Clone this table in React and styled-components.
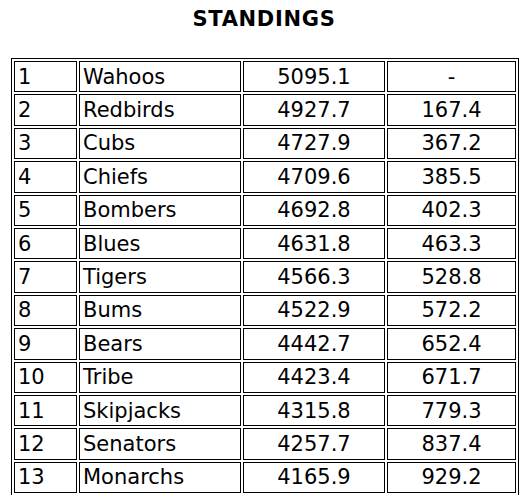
import React from 'react';
import styled, { createGlobalStyle } from 'styled-components';

const GlobalStyle = createGlobalStyle`
    body {
        margin: 0;
        background: #ffffff;
        font-family: "DejaVu Sans", Verdana, sans-serif;
        color: #000000;
    }
`

const Page = styled.div`
    padding-top: 7px;
`

const Title = styled.h1`
    margin: 0;
    font-size: 21px;
    font-weight: bold;
    letter-spacing: 0.7px;
    line-height: 24px;
    text-align: center;
`

const StandingsTable = styled.table`
    margin: 27px 10px 0 11px;
    width: 508px;
    table-layout: fixed;
    border: 1px solid #000;
    border-bottom: none;
    border-spacing: 2px;
    font-size: 21px;
`

const Col = styled.col`
    width: ${props => props.$width}px;
`

const Cell = styled.td`
    box-sizing: border-box;
    height: 31.4px;
    padding: 0 3px;
    border: 1px solid #000;
    line-height: 24px;
    white-space: nowrap;
    text-align: ${props => (props.$center ? 'center' : 'left')};
`

const columns = [63, 162, 142, 129]

const teams = [
    [1, 'Wahoos', '5095.1', '-'],
    [2, 'Redbirds', '4927.7', '167.4'],
    [3, 'Cubs', '4727.9', '367.2'],
    [4, 'Chiefs', '4709.6', '385.5'],
    [5, 'Bombers', '4692.8', '402.3'],
    [6, 'Blues', '4631.8', '463.3'],
    [7, 'Tigers', '4566.3', '528.8'],
    [8, 'Bums', '4522.9', '572.2'],
    [9, 'Bears', '4442.7', '652.4'],
    [10, 'Tribe', '4423.4', '671.7'],
    [11, 'Skipjacks', '4315.8', '779.3'],
    [12, 'Senators', '4257.7', '837.4'],
    [13, 'Monarchs', '4165.9', '929.2'],
]

const App = () => {
    return (
        <Page>
            <GlobalStyle />
            <Title>STANDINGS</Title>
            <StandingsTable>
                <colgroup>
                    {columns.map((w, i) => <Col key={i} $width={w} />)}
                </colgroup>
                <tbody>
                    {teams.map(([rank, name, points, back]) => (
                        <tr key={rank}>
                            <Cell>{rank}</Cell>
                            <Cell>{name}</Cell>
                            <Cell $center>{points}</Cell>
                            <Cell $center>{back}</Cell>
                        </tr>
                    ))}
                </tbody>
            </StandingsTable>
        </Page>
    )
}

export default App
